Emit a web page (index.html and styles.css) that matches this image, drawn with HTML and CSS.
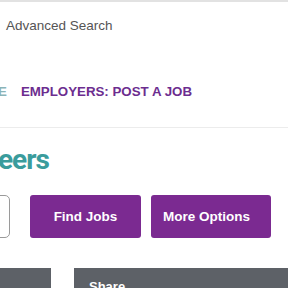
FILE: index.html
```html
<!DOCTYPE html>
<html>
<head>
<meta charset="utf-8">
<link rel="stylesheet" href="styles.css">
</head>
<body>
<div class="page">
  <div class="topbar"></div>
  <div class="util"><a class="adv">Advanced Search</a></div>
  <nav class="nav">
    <span class="nav-item active">E</span>
    <span class="nav-item">EMPLOYERS: POST A JOB</span>
  </nav>
  <h1 class="title">eers</h1>
  <div class="search">
    <div class="input"></div>
    <button class="btn find">Find Jobs</button>
    <button class="btn more">More Options</button>
  </div>
  <div class="panels">
    <div class="panel left"></div>
    <div class="panel right">Share</div>
  </div>
</div>
</body>
</html>
```
FILE: styles.css
```css
* { box-sizing: border-box; }
html, body { margin: 0; padding: 0; background: #fff; }
body { width: 288px; height: 288px; overflow: hidden; font-family: "Liberation Sans", Arial, sans-serif; }
.page { display: flex; flex-direction: column; }
.topbar { height: 2px; background: #e2e2e2; }
.util { padding: 14px 0 0 6px; height: 44px; }
.adv { font-size: 13.5px; color: #555; }
.nav { display: flex; gap: 14px; height: 82px; padding-top: 38px; border-bottom: 1px solid #ececec; font-weight: bold; font-size: 13.3px; }
.nav-item { color: #6c2d8f; }
.nav-item.active { color: #8ab4b8; margin-left: -2px; }
.title { margin: 15px 0 0 -2px; font-family: Roboto, "Liberation Sans", sans-serif; font-size: 28px; line-height: 34px; color: #3a9c9c; font-weight: bold; letter-spacing: -1px; }
.search { display: flex; margin-top: 18px; height: 43px; }
.input { width: 20px; margin-left: -10px; border: 1px solid #9a9a9a; border-radius: 5px; }
.btn { border: 0; background: #7b2a91; color: #fff; font-family: inherit; font-weight: bold; font-size: 13.5px; border-radius: 3px; height: 43px; padding: 0; }
.find { width: 111px; margin-left: 20px; }
.more { width: 120px; margin-left: 10px; text-align: left; padding-left: 12px; }
.panels { display: flex; margin-top: 30px; height: 20px; overflow: visible; }
.panel { background: #5d6167; height: 40px; }
.left { width: 51px; }
.right { margin-left: 23px; flex: 1; color: #fff; font-weight: bold; font-size: 13px; padding: 11px 0 0 15px; }
```
